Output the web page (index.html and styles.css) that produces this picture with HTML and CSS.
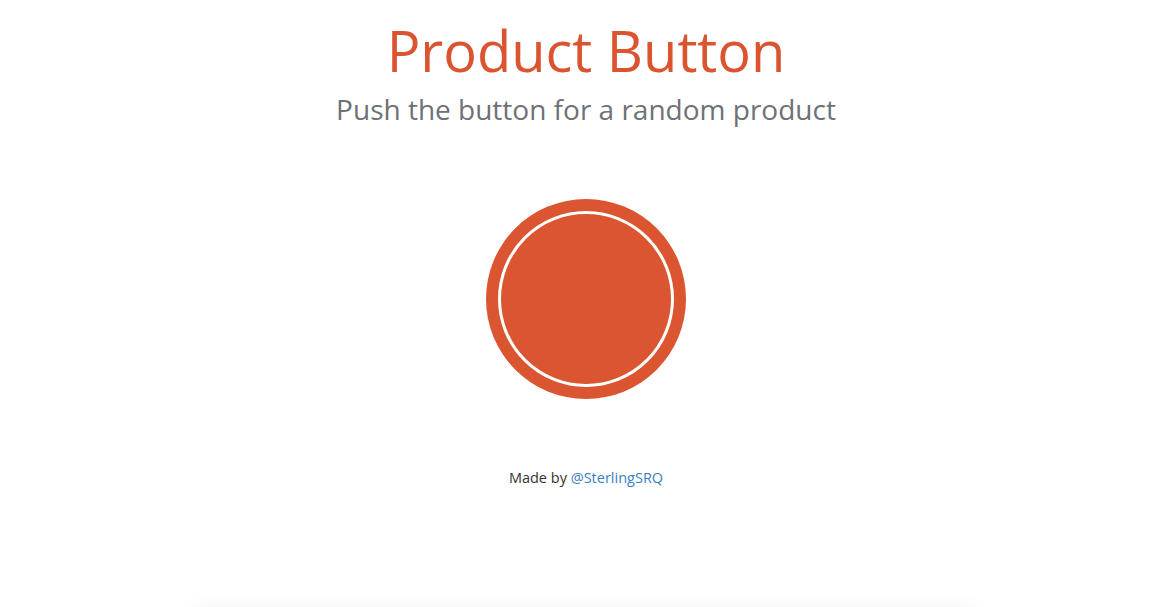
FILE: index.html
```html
<!DOCTYPE html>
<html lang="en">
<head>
<meta charset="utf-8">
<title>Product Button</title>
<link rel="stylesheet" href="styles.css">
</head>
<body>
<main class="page">
  <header class="intro">
    <h1 class="title">Product Button</h1>
    <p class="subtitle">Push the button for a random product</p>
  </header>
  <div class="button-wrap">
    <button class="product-button" type="button" aria-label="Get a random product">
      <span class="ring"></span>
    </button>
  </div>
  <footer class="credit">Made by <a href="#">@SterlingSRQ</a></footer>
  <section class="results"></section>
</main>
</body>
</html>
```
FILE: styles.css
```css
html, body {
  margin: 0;
  padding: 0;
  background: #fff;
}
body {
  font-family: "Open Sans", "Noto Sans", sans-serif;
  overflow: hidden;
  height: 607px;
}
.page {
  display: flex;
  flex-direction: column;
  align-items: center;
}
.intro {
  display: flex;
  flex-direction: column;
  align-items: center;
}
.title {
  margin: 22px 0 0;
  font-size: 56px;
  line-height: 56px;
  font-weight: 400;
  color: #db5430;
}
.subtitle {
  margin: 17px 0 0;
  font-size: 28px;
  line-height: 28px;
  color: #6e7175;
}
.button-wrap {
  margin-top: 76px;
}
.product-button {
  display: block;
  width: 200px;
  height: 200px;
  padding: 12px;
  border: 0;
  border-radius: 50%;
  background: #da5530;
  cursor: pointer;
  box-sizing: border-box;
}
.ring {
  display: block;
  width: 100%;
  height: 100%;
  box-sizing: border-box;
  border: 3px solid #fff;
  border-radius: 50%;
}
.credit {
  margin-top: 69px;
  font-size: 14.5px;
  line-height: 20px;
  color: #333;
}
.credit a {
  color: #3a7fc0;
  text-decoration: none;
}
.results {
  margin-top: 126px;
  width: 780px;
  height: 200px;
  border-radius: 8px;
  box-shadow: 0 0 28px rgba(0, 0, 0, 0.08);
}
```
